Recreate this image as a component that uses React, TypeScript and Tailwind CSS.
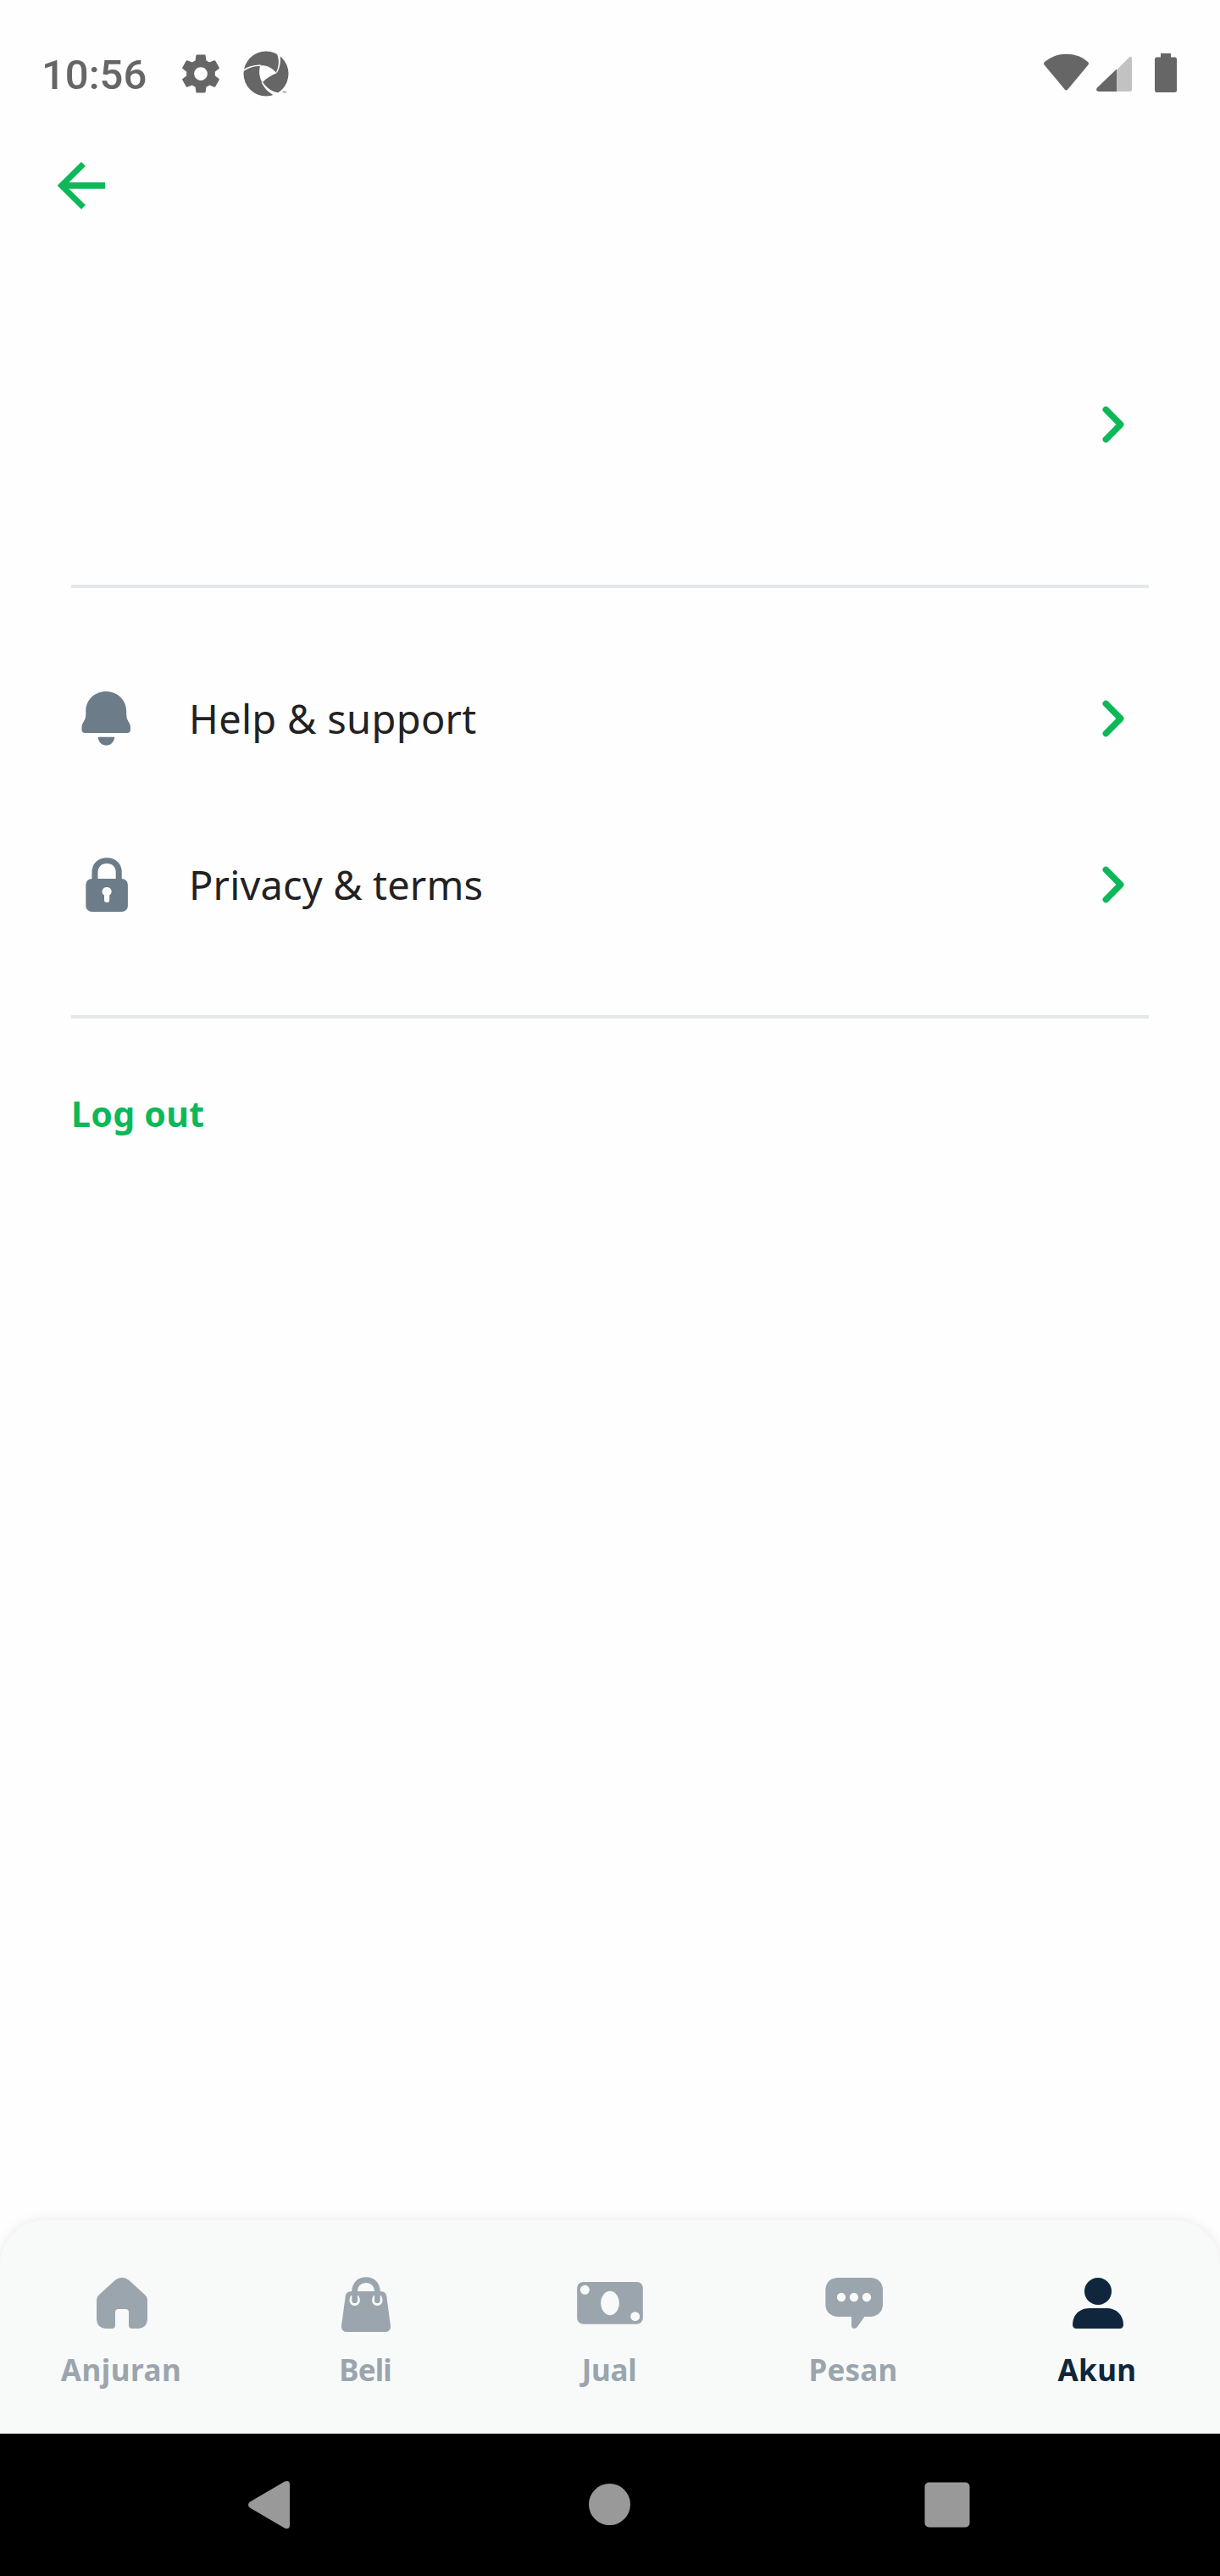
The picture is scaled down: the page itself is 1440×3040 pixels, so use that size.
import React from "react";

const GREEN = "#0cb858";

function Gear() {
  return (
    <svg className="h-[54px] w-[54px]" viewBox="0 0 24 24" fill="#666666">
      <path d="M19.43 12.98c.04-.32.07-.64.07-.98s-.03-.66-.07-.98l2.11-1.65c.19-.15.24-.42.12-.64l-2-3.46c-.12-.22-.39-.3-.61-.22l-2.49 1c-.52-.4-1.08-.73-1.69-.98l-.38-2.65C14.46 2.18 14.25 2 14 2h-4c-.25 0-.46.18-.49.42l-.38 2.65c-.61.25-1.17.59-1.69.98l-2.49-1c-.23-.09-.49 0-.61.22l-2 3.46c-.13.22-.07.49.12.64l2.11 1.65c-.04.32-.07.65-.07.98s.03.66.07.98l-2.11 1.65c-.19.15-.24.42-.12.64l2 3.46c.12.22.39.3.61.22l2.49-1c.52.4 1.08.73 1.69.98l.38 2.65c.03.24.24.42.49.42h4c.25 0 .46-.18.49-.42l.38-2.65c.61-.25 1.17-.59 1.69-.98l2.49 1c.23.09.49 0 .61-.22l2-3.46c.12-.22.07-.49-.12-.64l-2.11-1.65zM12 15.5c-1.93 0-3.5-1.57-3.5-3.5s1.57-3.5 3.5-3.5 3.5 1.57 3.5 3.5-1.57 3.5-3.5 3.5z" />
    </svg>
  );
}

function Aperture() {
  return (
    <svg className="h-[54px] w-[54px]" viewBox="862 88 162 162">
      <circle cx="943" cy="169" r="79.5" fill="#666666" />
      <g fill="#fefefe">
        <path d="M922 141C940 137 962 146 981 167C963 174 944 185 930 200C919 183 917 161 922 141Z" />
        <path d="M860 156C880 143 903 136 926 138L924 142C902 141 882 147 860 162Z" />
        <path d="M927 200C938 222 952 236 972 246L990 237C966 233 944 219 931 198Z" />
        <path d="M981 97C990 117 990 141 979 163L982 166C992 147 996 127 993 106L1012 100L990 80Z" />
      </g>
      <path d="M1002 232h12v4h-3v-1h-2v1h-2v-2h-5z" fill="#666666" />
    </svg>
  );
}

function StatusIcons() {
  return (
    <svg className="h-[54px] w-[168px]" viewBox="0 0 168 54" fill="#666666">
      <path d="M5 17C20 4.500 41 4.500 56 17Q57.800 18.600 56.400 20.500L32.300 49.600Q30.500 51.400 28.700 49.600L4.600 20.500Q3.200 18.600 5 17Z" />
      <path d="M90 26.500L105 11.500Q108 9.500 108 13V49.500Q108 52 105.500 52H90Z" fill="#c2c2c2" />
      <path d="M90 25.500V52H68.500Q64.500 51 67 47.500Z" />
      <path d="M142 7h12v4.500h4.500q2.500 0 2.500 2.500v36.500q0 2.500-2.500 2.500h-21q-2.500 0-2.500-2.500v-36.500q0-2.500 2.500-2.500h4.500z" />
    </svg>
  );
}

function Chevron() {
  return (
    <svg className="h-[84px] w-[84px]" viewBox="0 0 84 84" fill="none" stroke={GREEN} strokeWidth="7.500" strokeLinecap="round" strokeLinejoin="round">
      <path d="M33.300 24.400L50.700 42L33.300 59.600" />
    </svg>
  );
}

function Bell() {
  return (
    <svg className="h-[84px] w-[84px]" viewBox="69.700 78 244 252" preserveAspectRatio="none" fill="#6c7c89">
      <path d="M189 108C227 108 259 137 259 178V190C259 213 273 217 273 236V243Q273 255 261 255H118Q106 255 106 243V236C106 217 120 213 120 190V178C120 137 151 108 189 108Z" />
      <path d="M164 269H216Q219 269 218 273C215 290 203 299 190 299S165 290 162 273Q161 269 164 269Z" />
    </svg>
  );
}

function Lock() {
  return (
    <svg className="h-[84px] w-[84px]" viewBox="69.700 666 244 252" preserveAspectRatio="none" fill="#6c7c89">
      <path d="M151 775V748C151 724 167 707 192 707S233 724 233 748V775" fill="none" stroke="#6c7c89" strokeWidth="20.500" />
      <rect x="120" y="771" width="144" height="117" rx="21" />
      <path d="M192 801a15.500 15.500 0 0 1 9 28.500V846a9 9 0 0 1-18 0V829.500a15.500 15.500 0 0 1 9-28.500Z" fill="#fefefe" />
    </svg>
  );
}

function Home() {
  return (
    <svg className="h-[84px] w-[84px]" viewBox="306 258 252 252" fill="#9ba5ad">
      <path d="M408 302Q432 285 456 302L512 353Q522 362 522 375V442Q520 471 491 474H468Q456 474 456 462V417Q456 405 444 405H420Q408 405 408 417V462Q408 474 396 474H373Q344 471 342 442V375Q342 362 352 353Z" />
    </svg>
  );
}

function Bag() {
  return (
    <svg className="h-[84px] w-[84px]" viewBox="1170 258 252 252">
      <path d="M1245 342H1347Q1367 342 1369 361L1383 464Q1384 486 1362 486H1230Q1208 486 1209 464L1223 361Q1225 342 1245 342Z" fill="#9ba5ad" />
      <path d="M1243 357C1232 372 1238 393 1256 393S1280 372 1269 357ZM1323 357C1312 372 1318 393 1336 393S1360 372 1349 357Z" fill="#f8faf9" />
      <path d="M1256 374V342C1256 318 1272 302 1296 302S1336 318 1336 342V374" fill="none" stroke="#9ba5ad" strokeWidth="20" strokeLinecap="round" />
    </svg>
  );
}

function Cash() {
  return (
    <svg className="h-[84px] w-[84px]" viewBox="174 48 252 252">
      <rect x="183.500" y="99" width="233" height="149" rx="21" fill="#9ba5ad" />
      <g fill="#f8faf9">
        <circle cx="211" cy="127" r="16.500" />
        <circle cx="389" cy="221" r="16.500" />
        <ellipse cx="300" cy="174" rx="32.500" ry="42.500" />
      </g>
    </svg>
  );
}

function Chat() {
  return (
    <svg className="h-[84px] w-[84px]" viewBox="1038 48 252 252">
      <path d="M1105 84H1224Q1263 88 1266 125V181Q1263 218 1224 222H1201L1175 259Q1170 265 1163 264Q1155 262 1155 252V222H1105Q1066 218 1063 181V125Q1066 88 1105 84Z" fill="#9ba5ad" />
      <g fill="#f8faf9">
        <circle cx="1119" cy="153" r="15.500" />
        <circle cx="1164" cy="153" r="15.500" />
        <circle cx="1209" cy="153" r="15.500" />
      </g>
    </svg>
  );
}

function Person() {
  return (
    <svg className="h-[84px] w-[84px]" viewBox="222 258 252 252" fill="#0f263d">
      <circle cx="348" cy="342" r="48" />
      <path d="M318 402H378C414 402 437 426 438 459Q438 474 424 474H272Q258 474 258 459C259 426 282 402 318 402Z" />
    </svg>
  );
}

const rows = [
  { icon: <Bell />, label: "Help & support", spacing: "tracking-[0.3px]" },
  { icon: <Lock />, label: "Privacy & terms", spacing: "tracking-[0.15px]" },
];

const tabs = [
  { icon: <Home />, label: "Anjuran", text: "text-[#9ba5ad] tracking-[0.5px]" },
  { icon: <Bag />, label: "Beli", text: "text-[#9ba5ad] tracking-[-0.9px]" },
  { icon: <Cash />, label: "Jual", text: "text-[#9ba5ad] tracking-[-0.3px]" },
  { icon: <Chat />, label: "Pesan", text: "text-[#9ba5ad] tracking-[0.2px]" },
  { icon: <Person />, label: "Akun", text: "text-[#0f263d] tracking-[0.4px]" },
];

export default function App() {
  return (
    <div className="flex h-[3040px] w-[1440px] flex-col overflow-hidden bg-[#fefefe] font-['Noto_Sans',sans-serif]">
      <header className="flex h-[177px] shrink-0 items-start justify-between pt-[60px] pr-[44px] pl-[49px]">
        <div className="flex">
          <span className="w-[161px] pt-px font-[Roboto,sans-serif] text-[49px] leading-[55px] font-medium text-[#666666]">10:56</span>
          <Gear />
          <span className="ml-[23px]">
            <Aperture />
          </span>
        </div>
        <span className="-mt-[4px]">
          <StatusIcons />
        </span>
      </header>

      <button className="ml-[54px] w-[84px] shrink-0" aria-label="Back">
        <svg className="h-[84px] w-[84px]" viewBox="0 0 24 24" fill={GREEN}>
          <path d="M20 10.900H7.830l5.590-5.490L12 4l-8.100 8 8.100 8 1.410-1.410L7.830 13.100H20z" />
        </svg>
      </button>

      <main className="flex flex-1 flex-col px-[84px]">
        <section className="flex h-[433px] items-start justify-end border-b-4 border-[#e4e8eb] pt-[198px]">
          <Chevron />
        </section>
        <section className="flex h-[508px] flex-col gap-[112px] border-b-4 border-[#e4e8eb] pt-[112px]">
          {rows.map((r) => (
            <div key={r.label} className="flex h-[84px] items-center">
              {r.icon}
              <span className={`ml-[55px] flex-1 text-[47px] leading-[64px] whitespace-nowrap text-[#222222] ${r.spacing}`}>{r.label}</span>
              <Chevron />
            </div>
          ))}
        </section>
        <button className="mt-[84px] self-start text-[41px] leading-[56px] font-bold tracking-[0.3px] text-[#0cb858]">Log out</button>
      </main>

      <nav className="grid h-[252px] shrink-0 grid-cols-5 rounded-t-[54px] bg-[#f8faf9] pt-[56px] shadow-[0_0_14px_rgba(0,0,0,0.09)]">
        {tabs.map((t) => (
          <div key={t.label} className="flex flex-col items-center">
            {t.icon}
            <span className={`mt-[13px] pr-[2px] text-[35px] leading-[48px] font-bold ${t.text}`}>{t.label}</span>
          </div>
        ))}
      </nav>

      <footer className="relative z-10 h-[168px] shrink-0 bg-black">
        <svg className="h-[168px] w-[1440px]" viewBox="0 2872 1440 168" fill="#999999">
          <path d="M295 2952.500L336 2928.600Q342 2926.500 342 2932V2980Q342 2985.500 336 2983.400L295 2959.500Q291 2956 295 2952.500Z" />
          <circle cx="719.500" cy="2955.500" r="24.500" />
          <rect x="1091.500" y="2929.500" width="53" height="53" rx="5" />
        </svg>
      </footer>
    </div>
  );
}
